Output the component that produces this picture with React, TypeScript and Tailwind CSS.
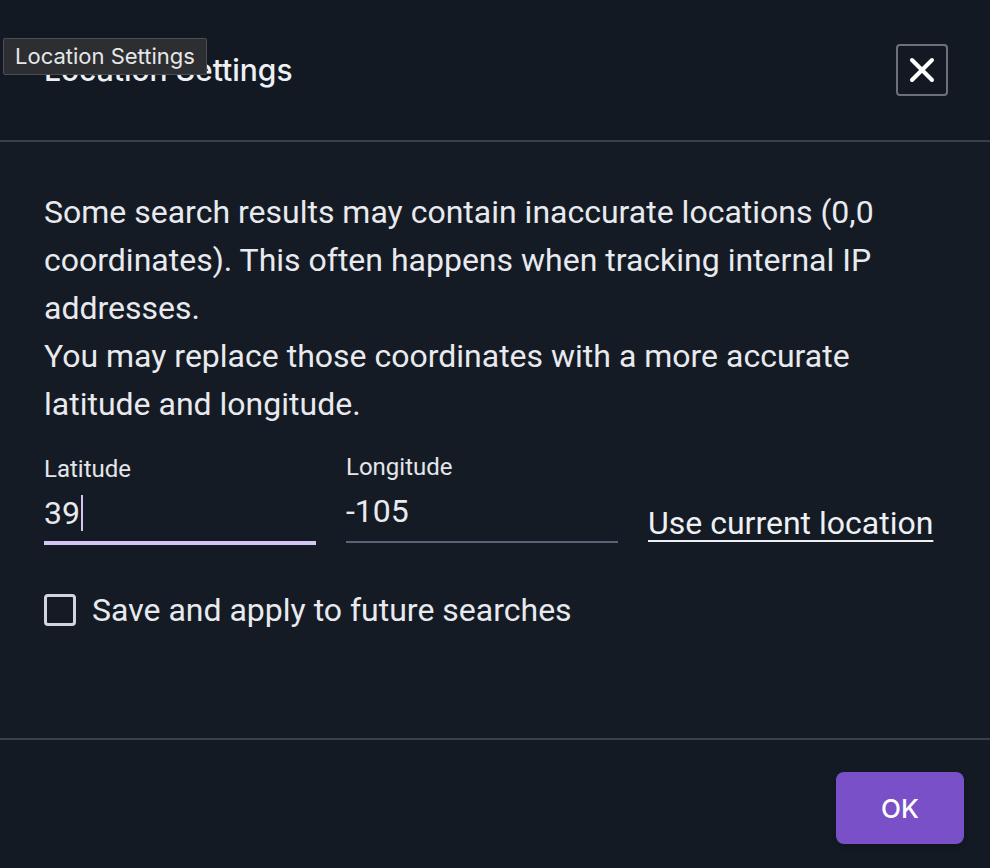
import { X } from "lucide-react"

export default function App() {
  return (
    <div className="relative flex h-[868px] w-[990px] flex-col overflow-hidden bg-[#151b25] font-['Roboto',sans-serif] text-[#e8eaee]">
      {/* Header */}
      <div className="flex h-[140px] shrink-0 items-center justify-between bg-[#131922] pl-[44px] pr-[42px]">
        <h1 className="font-['Inter',sans-serif] text-[30px] font-medium text-[#eef0f3]">Location Settings</h1>
        <button className="flex h-[52px] w-[52px] items-center justify-center rounded-[4px] border-2 border-[#6c7079] text-white">
          <X size={40} strokeWidth={2.4} />
        </button>
      </div>
      <div className="h-[2px] shrink-0 bg-[#3a4049]" />

      {/* Body */}
      <div className="flex flex-1 flex-col px-[44px] pt-[46px]">
        <p className="text-[32px] leading-[48px] text-[#e8eaee]">
          Some search results may contain inaccurate locations (0,0 coordinates). This often happens when tracking internal IP addresses.
          <br />
          You may replace those coordinates with a more accurate latitude and longitude.
        </p>

        <div className="mt-[25px] flex items-end gap-[30px]">
          <div className="flex w-[272px] flex-col">
            <label className="text-[24px] leading-[28px] text-[#e4e6ea]">Latitude</label>
            <div className="flex h-[62px] items-center border-b-4 border-[#d3c4f0] pt-[2px] text-[32px]">
              <span>39</span>
              <span className="ml-[1px] h-[36px] w-[2px] bg-[#d3c4f0]" />
            </div>
          </div>
          <div className="flex w-[272px] flex-col">
            <label className="text-[24px] leading-[28px] text-[#e4e6ea]">Longitude</label>
            <div className="mb-[2px] flex h-[62px] items-center border-b-2 border-[#5d6374] text-[32px]">
              -105
            </div>
          </div>
          <a className="text-[32px] leading-[44px] text-[#eef0f3] underline decoration-2 underline-offset-[6px]">
            Use current location
          </a>
        </div>

        <label className="mt-[47px] flex items-center gap-[16px]">
          <span className="h-[32px] w-[32px] rounded-[4px] border-[3px] border-[#d2d5dd]" />
          <span className="text-[32px] leading-[36px]">Save and apply to future searches</span>
        </label>
      </div>

      {/* Footer */}
      <div className="h-[2px] shrink-0 bg-[#3a4049]" />
      <div className="flex h-[128px] shrink-0 items-end justify-end bg-[#141a23] pb-[24px] pr-[26px]">
        <button className="h-[72px] w-[128px] rounded-[8px] bg-[#7950c8] font-['Inter',sans-serif] text-[26px] font-medium text-white shadow-md">
          OK
        </button>
      </div>

      {/* Tooltip */}
      <div className="absolute left-[3px] top-[38px] rounded-[2px] border border-[#4b4e54] bg-[#2c2e32] px-[11px] py-[2px] font-['Inter',sans-serif] text-[22px] leading-[31px] text-[#e6e7e9]">
        Location Settings
      </div>
    </div>
  )
}
